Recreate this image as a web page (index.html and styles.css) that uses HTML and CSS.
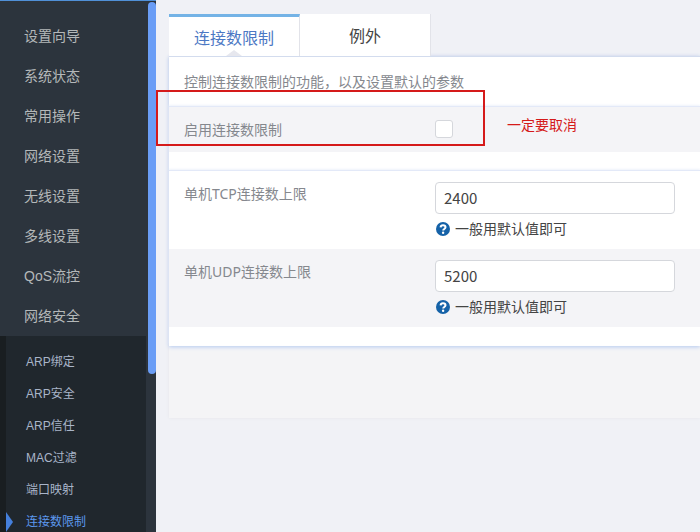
FILE: index.html
```
<!DOCTYPE html>
<html lang="zh-CN">
<head>
    <meta charset="utf-8">
    <title>连接数限制</title>
    <link rel="stylesheet" href="styles.css">
</head>
<body>

<aside class="sidebar">
    <nav class="menu">
        <ul class="menu-list">
            <li><a href="#">设置向导</a></li>
            <li><a href="#">系统状态</a></li>
            <li><a href="#">常用操作</a></li>
            <li><a href="#">网络设置</a></li>
            <li><a href="#">无线设置</a></li>
            <li><a href="#">多线设置</a></li>
            <li><a href="#">QoS流控</a></li>
            <li><a href="#">网络安全</a></li>
        </ul>
        <ul class="submenu">
            <li><a href="#">ARP绑定</a></li>
            <li><a href="#">ARP安全</a></li>
            <li><a href="#">ARP信任</a></li>
            <li><a href="#">MAC过滤</a></li>
            <li><a href="#">端口映射</a></li>
            <li><a href="#" class="active">连接数限制</a></li>
        </ul>
    </nav>
    <div class="scrollbar"><div class="scroll-thumb"></div></div>
</aside>

<main class="content">
    <div class="tabs">
        <button type="button" class="tab tab-active">连接数限制</button>
        <button type="button" class="tab">例外</button>
    </div>
    <div class="page">
        <form class="panel">
            <p class="intro">控制连接数限制的功能，以及设置默认的参数</p>
            <div class="section">
                <div class="row row-grey row-check">
                    <label class="row-label" for="enable">启用连接数限制</label>
                    <input type="checkbox" id="enable" class="check">
                </div>
            </div>
            <div class="section">
                <div class="row">
                    <label class="row-label" for="tcp">单机TCP连接数上限</label>
                    <div class="field">
                        <input type="text" id="tcp" class="text" value="2400">
                        <p class="tip">
                            <svg class="tip-icon" viewBox="0 0 14 14">
                                <circle cx="7" cy="7" r="7" fill="#1562a8"/>
                                <path d="M4.6 5.4C4.7 3.9 5.6 3.3 7 3.3c1.5 0 2.5.8 2.5 2 0 1.7-2.3 1.6-2.3 3.2" fill="none" stroke="#fff" stroke-width="2"/>
                                <circle cx="7.1" cy="10.7" r="1.2" fill="#fff"/>
                            </svg>
                            一般用默认值即可
                        </p>
                    </div>
                </div>
                <div class="row row-grey">
                    <label class="row-label" for="udp">单机UDP连接数上限</label>
                    <div class="field">
                        <input type="text" id="udp" class="text" value="5200">
                        <p class="tip">
                            <svg class="tip-icon" viewBox="0 0 14 14">
                                <circle cx="7" cy="7" r="7" fill="#1562a8"/>
                                <path d="M4.6 5.4C4.7 3.9 5.6 3.3 7 3.3c1.5 0 2.5.8 2.5 2 0 1.7-2.3 1.6-2.3 3.2" fill="none" stroke="#fff" stroke-width="2"/>
                                <circle cx="7.1" cy="10.7" r="1.2" fill="#fff"/>
                            </svg>
                            一般用默认值即可
                        </p>
                    </div>
                </div>
            </div>
        </form>
    </div>

    <!-- callout over the enable row -->
    <div class="mark-box"></div>
    <div class="mark-text">一定要取消</div>
</main>

</body>
</html>
```

FILE: styles.css
```
* {
    box-sizing: border-box;
}

body {
    margin: 0;
    display: flex;
    height: 100vh;
    overflow: hidden;
    background-color: #f0f1f6;
    font-family: "Noto Sans", "Noto Sans CJK SC", sans-serif;
    font-size: 14px;
    line-height: 20px;
}

ul, p {
    margin: 0;
    padding: 0;
    list-style: none;
}

a {
    text-decoration: none;
}

/* sidebar */
.sidebar {
    display: flex;
    flex: none;
    width: 156px;
    background-color: #2c343d;
    border-top: 1px solid #5090d8;
    overflow: hidden;
    font-family: "Liberation Sans", "Noto Sans CJK SC", sans-serif;
}

.menu {
    flex: 1;
}

.menu-list {
    padding-top: 15px;
}

.menu-list a {
    display: block;
    padding-left: 24px;
    line-height: 40px;
    color: #b4b8b9;
}

.submenu {
    margin-right: 2px;
    padding-top: 10px;
    background-color: #20272d;
    border-left: 6px solid #191e21;
}

.submenu a {
    display: block;
    position: relative;
    padding-left: 20px;
    font-size: 12px;
    line-height: 32px;
    color: #a9b5c9;
}

.submenu .active {
    color: #5c98ee;
}

.submenu .active::before {
    content: "";
    position: absolute;
    left: 0;
    top: 6px;
    border: 10px solid transparent;
    border-left: 7px solid #4580dc;
    border-right: 0;
}

.scrollbar {
    width: 8px;
}

.scroll-thumb {
    height: 70%;
    min-height: 40px;
    margin-top: 1px;
    border-radius: 4px;
    background-color: #6a9df6;
}

/* content */
.content {
    flex: 1;
    position: relative;
    padding: 14px 0 0 13px;
}

.tabs {
    display: flex;
}

.tab {
    width: 131px;
    height: 42px;
    padding: 0;
    border: 0;
    border-right: 1px solid #e2e3e9;
    background-color: #fff;
    color: #444;
    font-family: inherit;
    font-size: 16px;
}

.tab-active {
    position: relative;
    border-top: 3px solid #74b3e6;
    color: #4c78c4;
}

.tab-active::after {
    content: "";
    position: absolute;
    left: 57px;
    bottom: 0;
    border: 8px solid transparent;
    border-top: 0;
    border-bottom: 6px solid #e6e7ee;
}

.page {
    padding-bottom: 72px;
    background-color: #f4f4f6;
    box-shadow: 0 0 3px #e4e5ea;
}

.panel {
    padding-bottom: 1px;
    background-color: #fff;
    box-shadow: 0 1px 4px #b4c9f0;
    border-top: 1px solid #d3dcee;
}

.intro {
    padding: 15px 15px 14px;
    color: #85888e;
}

.section {
    padding-bottom: 18px;
    border-top: 1px solid #e3e9f8;
    box-shadow: 0 -1px 2px #eef2fb;
}

.row {
    display: flex;
    align-items: flex-start;
    min-height: 78px;
    padding: 11px 15px 9px;
}

.row-grey {
    background-color: #f4f4f7;
}

.row-check {
    min-height: 45px;
    padding-top: 13px;
}

.row-label {
    flex: none;
    width: 251px;
    padding-top: 2px;
    color: #85888e;
}

.row-check .row-label {
    padding-top: 0;
}

.check {
    appearance: none;
    width: 18px;
    height: 18px;
    margin: 0;
    border: 1px solid #d5d7dc;
    border-radius: 3px;
    background-color: #fff;
}

.text {
    display: block;
    width: 240px;
    height: 32px;
    padding: 0 8px 2px;
    border: 1px solid #d5d7dc;
    border-radius: 4px;
    background-color: #fff;
    color: #444;
    font-family: "Noto Sans CJK SC", sans-serif;
    font-size: 15px;
}

.tip {
    display: flex;
    align-items: center;
    gap: 5px;
    padding: 5px 0 0 1px;
    color: #444;
}

.tip-icon {
    width: 14px;
    height: 14px;
}

/* callout */
.mark-box {
    position: absolute;
    left: 0;
    top: 90px;
    width: 329px;
    height: 56px;
    border: 2px solid #d51a1a;
    pointer-events: none;
}

.mark-text {
    position: absolute;
    left: 351px;
    top: 115px;
    color: #d51a1a;
}
```
